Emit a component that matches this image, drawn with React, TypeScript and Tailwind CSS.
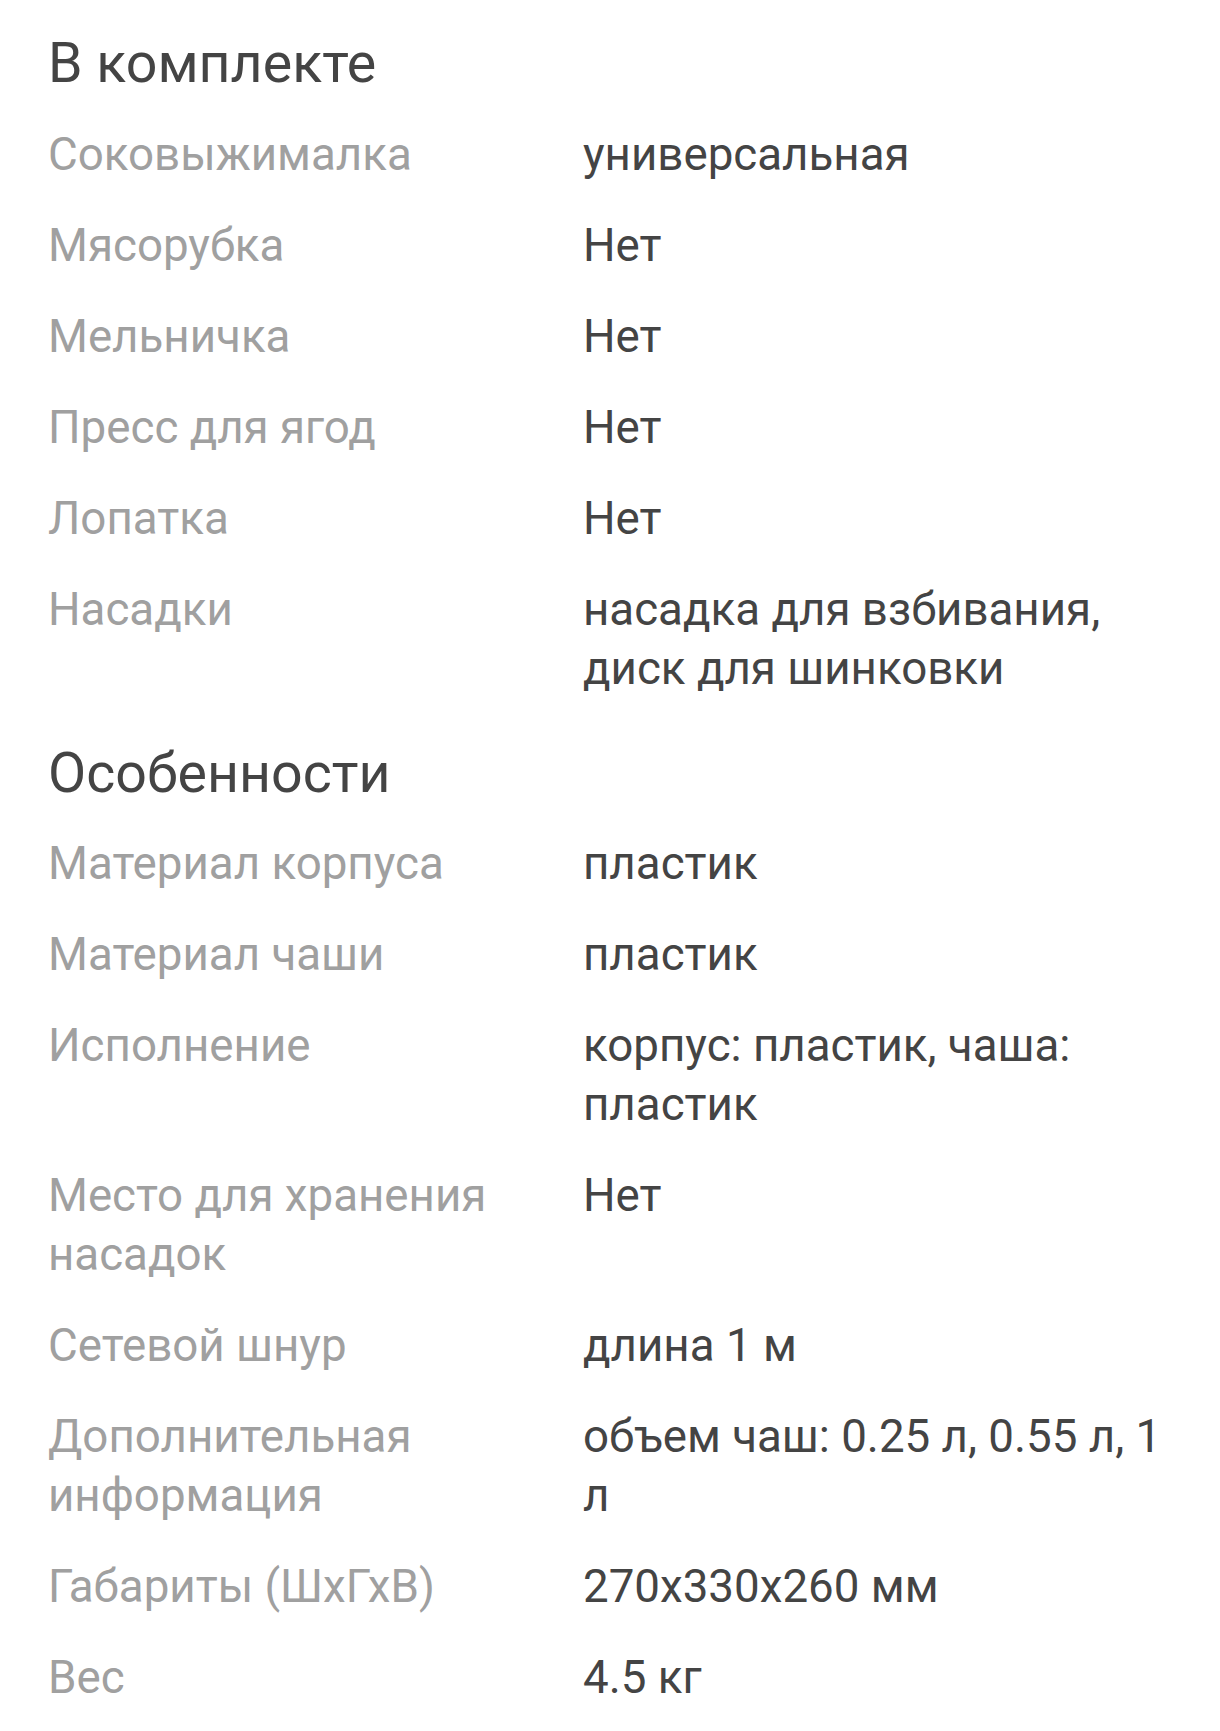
import React from "react";

type Row = { label: string; value: string };

const sections: { title: string; rows: Row[] }[] = [
  {
    title: "В комплекте",
    rows: [
      { label: "Соковыжималка", value: "универсальная" },
      { label: "Мясорубка", value: "Нет" },
      { label: "Мельничка", value: "Нет" },
      { label: "Пресс для ягод", value: "Нет" },
      { label: "Лопатка", value: "Нет" },
      { label: "Насадки", value: "насадка для взбивания, диск для шинковки" },
    ],
  },
  {
    title: "Особенности",
    rows: [
      { label: "Материал корпуса", value: "пластик" },
      { label: "Материал чаши", value: "пластик" },
      { label: "Исполнение", value: "корпус: пластик, чаша: пластик" },
      { label: "Место для хранения насадок", value: "Нет" },
      { label: "Сетевой шнур", value: "длина 1 м" },
      { label: "Дополнительная информация", value: "объем чаш: 0.25 л, 0.55 л, 1 л" },
      { label: "Габариты (ШхГхВ)", value: "270x330x260 мм" },
      { label: "Вес", value: "4.5 кг" },
    ],
  },
];

export default function App() {
  return (
    <div
      className="w-[1220px] min-h-[1731px] bg-white pl-[48px] pr-[47px] pt-[32px]"
      style={{ fontFamily: "Roboto, 'Noto Sans', sans-serif" }}
    >
      <div className="flex flex-col gap-[44px]">
        {sections.map((s) => (
          <section key={s.title} className="flex flex-col gap-[28.5px]">
            <h2 className="text-[55.5px] leading-[64px] font-normal text-[#444444]">{s.title}</h2>
            <div className="flex flex-col gap-[32px]">
              {s.rows.map((r) => (
                <div key={r.label} className="grid grid-cols-[535px_1fr] text-[45.7px] leading-[59px]">
                  <div className="text-[#a0a0a0] pr-[20px]">{r.label}</div>
                  <div className="text-[#444444]">{r.value}</div>
                </div>
              ))}
            </div>
          </section>
        ))}
      </div>
    </div>
  );
}
